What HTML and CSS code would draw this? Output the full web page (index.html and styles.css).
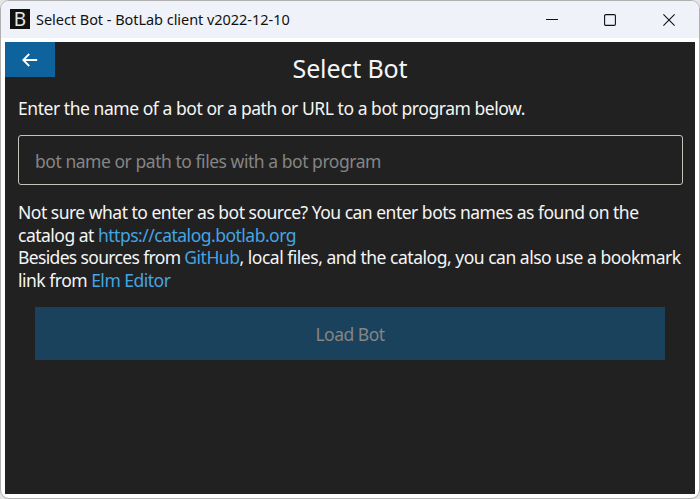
FILE: index.html
```html
<!DOCTYPE html>
<html lang="en">
<head>
<meta charset="utf-8">
<title>Select Bot - BotLab client v2022-12-10</title>
<link rel="stylesheet" href="styles.css">
</head>
<body>
<div class="window">
  <header class="titlebar">
    <span class="app-icon">B</span>
    <span class="window-title">Select Bot - BotLab client v2022-12-10</span>
    <svg class="control" viewBox="0 0 12 12"><path d="M0 5.5H12"/></svg>
    <svg class="control" viewBox="0 0 12 12"><rect x=".6" y=".6" width="10.8" height="10.8" rx="1.2"/></svg>
    <svg class="control" viewBox="0 0 12 12"><path d="M.4 .4L11.6 11.6M11.6 .4L.4 11.6"/></svg>
  </header>
  <main class="content">
    <div class="top">
      <button class="back" aria-label="Back"><svg viewBox="0 0 16 14"><path d="M15.2 7H1.5M7.2 1L1.2 7L7.2 13"/></svg></button>
      <h1>Select Bot</h1>
    </div>
    <p class="intro">Enter the name of a bot or a path or URL to a bot program below.</p>
    <input class="source" type="text" placeholder="bot name or path to files with a bot program">
    <p class="help">
      <span class="line">Not sure what to enter as bot source? You can enter bots names as found on the</span>
      <span class="line">catalog at <a>https://catalog.botlab.org</a></span>
      <span class="line"><span class="tight">Besides sources from </span><a>GitHub</a><span class="loose">, local files, and the catalog, you can also use a bookmark</span></span>
      <span class="line">link from <a>Elm Editor</a></span>
    </p>
    <button class="load" disabled>Load Bot</button>
  </main>
</div>
</body>
</html>
```
FILE: styles.css
```css
* { box-sizing: border-box; }
body {
  margin: 0;
  height: 499px;
  overflow: hidden;
  background: #e4e4e4;
  font-family: "Noto Sans", "Open Sans", sans-serif;
}
.window {
  height: 499px;
  border: 1px solid #b0b0b0;
  border-radius: 9px;
  background: #fff;
  padding: 0 4px 4px;
  overflow: hidden;
}
.titlebar {
  display: flex;
  align-items: center;
  height: 37px;
  margin: 0 -4px 4px;
  padding: 0 24px 0 9px;
  background: #eff3f9;
}
.app-icon {
  width: 20px;
  height: 20px;
  margin-top: -1px;
  background: #111;
  color: #e8e8e8;
  font-size: 19px;
  line-height: 20px;
  text-align: center;
}
.window-title {
  flex: 1;
  margin: -2px 0 0 6px;
  color: #111;
  font-size: 14.5px;
  line-height: 20px;
  letter-spacing: -0.04px;
  white-space: nowrap;
}
.control {
  width: 12px;
  height: 12px;
  margin-left: 46px;
  fill: none;
  stroke: #111;
  stroke-width: 1.1;
}
.control:first-of-type { margin-left: 0; }
.control:last-of-type { margin-left: 47px; }
.content {
  height: 452px;
  background: #212121;
  color: #f5f5f5;
  font-size: 17.5px;
}
.top {
  display: grid;
  grid-template-columns: 50px 1fr 50px;
  height: 48px;
}
.back {
  display: flex;
  align-items: center;
  justify-content: center;
  width: 50px;
  height: 35px;
  padding: 0;
  border: 0;
  background: #0e639c;
}
.back svg {
  width: 16px;
  height: 14px;
  fill: none;
  stroke: #fff;
  stroke-width: 1.8;
}
h1 {
  margin: 8px 0 0;
  font-size: 25px;
  font-weight: 400;
  line-height: 36px;
  text-align: center;
  letter-spacing: -0.15px;
}
.intro {
  margin: 6px 13px 0;
  line-height: 24px;
  letter-spacing: -0.45px;
  white-space: nowrap;
}
.source {
  display: block;
  width: 665px;
  height: 50px;
  margin: 15px 13px 0;
  padding: 2px 16px 0;
  border: 1px solid #c3c3b9;
  border-radius: 3px;
  background: #212121;
  color: #f5f5f5;
  font: 17.5px "Noto Sans", sans-serif;
  letter-spacing: -0.46px;
}
.source::placeholder { color: #858585; opacity: 1; }
.help {
  margin: 16px 13px 0;
  line-height: 22.6px;
}
.line {
  display: block;
  white-space: nowrap;
  letter-spacing: -0.5px;
}
.tight { letter-spacing: -0.65px; }
.loose { letter-spacing: -0.48px; }
a { color: #44a5e4; }
.load {
  display: block;
  width: 630px;
  height: 53px;
  margin: 15.6px 30px 0;
  padding: 2px 0 0;
  border: 0;
  background: #1a425d;
  color: #858585;
  font: 17.5px "Noto Sans", sans-serif;
  letter-spacing: -0.5px;
}
```
